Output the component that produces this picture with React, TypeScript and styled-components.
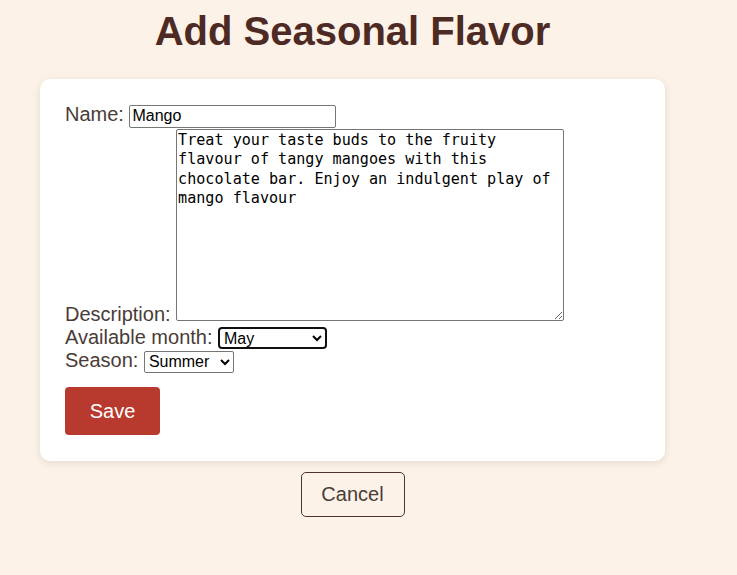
import React from "react";
import styled, { createGlobalStyle } from "styled-components";

const GlobalStyle = createGlobalStyle`
  html, body {
    margin: 0;
    padding: 0;
    background: #fdf2e7;
    font-family: "Liberation Sans", Arial, sans-serif;
  }
`;

const Page = styled.div`
  width: 625px;
  margin-left: 40px;
  display: flex;
  flex-direction: column;
  align-items: center;
`;

const Title = styled.h1`
  margin: 8px 0 25px;
  font-size: 40px;
  line-height: 46px;
  font-weight: bold;
  color: #4e2a24;
`;

const Card = styled.form`
  box-sizing: border-box;
  width: 625px;
  background: #ffffff;
  border-radius: 10px;
  box-shadow: 0 2px 8px rgba(0, 0, 0, 0.1);
  padding: 24px 25px 26px;
  display: flex;
  flex-direction: column;
`;

const Row = styled.div<{ $h?: number; $top?: number; $end?: boolean }>`
  display: flex;
  align-items: ${(p) => (p.$end ? "flex-end" : "baseline")};
  gap: 5.5px;
  margin-top: ${(p) => p.$top ?? 0}px;
  height: ${(p) => (p.$h ? `${p.$h}px` : "auto")};
`;

const Label = styled.label<{ $drop?: boolean }>`
  font-size: 20px;
  line-height: 23px;
  color: #4a3c38;
  margin-bottom: ${(p) => (p.$drop ? "-5px" : "0")};
`;

const TextInput = styled.input`
  box-sizing: border-box;
  width: 207px;
  height: 23px;
  padding: 1px 2px;
  border: 1px solid #767676;
  border-radius: 2px;
  font-family: "Liberation Sans", Arial, sans-serif;
  font-size: 16px;
  color: #000;
  margin: 0;
`;

const TextArea = styled.textarea`
  box-sizing: border-box;
  width: 388px;
  height: 192px;
  margin: 0;
  padding: 1px;
  border: 1px solid #767676;
  border-radius: 2px;
  font-family: "DejaVu Sans Mono", "Liberation Mono", monospace;
  font-size: 15.1px;
  line-height: 19.3px;
  color: #000;
`;

const Select = styled.select<{ $focus?: boolean; $w: number }>`
  box-sizing: border-box;
  width: ${(p) => p.$w}px;
  height: 22px;
  margin: 0;
  font-family: "Liberation Sans", Arial, sans-serif;
  font-size: 16px;
  color: #000;
  background: #fff;
  border: ${(p) => (p.$focus ? "2px solid #101010" : "1px solid #767676")};
  border-radius: ${(p) => (p.$focus ? "4px" : "2px")};
  outline: none;
`;

const SaveButton = styled.button`
  align-self: flex-start;
  margin-top: 15px;
  width: 95px;
  height: 48px;
  border: none;
  border-radius: 4px;
  background: #b83a2e;
  color: #ffffff;
  font-family: "Liberation Sans", Arial, sans-serif;
  font-size: 20px;
  padding: 0;
`;

const CancelButton = styled.button`
  margin-top: 11px;
  width: 104px;
  height: 45px;
  background: transparent;
  border: 1px solid #4e342e;
  border-radius: 5px;
  color: #4a3c38;
  font-family: "Liberation Sans", Arial, sans-serif;
  font-size: 20px;
  padding: 0;
`;

const months = [
  "January", "February", "March", "April", "May", "June",
  "July", "August", "September", "October", "November", "December",
];

export default function App() {
  return (
    <>
      <GlobalStyle />
      <Page>
        <Title>Add Seasonal Flavor</Title>
        <Card onSubmit={(e) => e.preventDefault()}>
          <Row $h={25}>
            <Label htmlFor="name">Name:</Label>
            <TextInput id="name" defaultValue="Mango" />
          </Row>
          <Row $top={1} $end>
            <Label htmlFor="desc" $drop>Description:</Label>
            <TextArea
              id="desc"
              defaultValue="Treat your taste buds to the fruity flavour of tangy mangoes with this chocolate bar. Enjoy an indulgent play of mango flavour"
            />
          </Row>
          <Row $h={23} $top={5}>
            <Label htmlFor="month">Available month:</Label>
            <Select id="month" $focus $w={109} defaultValue="May">
              {months.map((m) => (
                <option key={m} value={m}>{m}</option>
              ))}
            </Select>
          </Row>
          <Row $h={23}>
            <Label htmlFor="season">Season:</Label>
            <Select id="season" $w={90} defaultValue="Summer">
              <option value="Spring">Spring</option>
              <option value="Summer">Summer</option>
              <option value="Autumn">Autumn</option>
              <option value="Winter">Winter</option>
            </Select>
          </Row>
          <SaveButton type="submit">Save</SaveButton>
        </Card>
        <CancelButton type="button">Cancel</CancelButton>
      </Page>
    </>
  );
}
